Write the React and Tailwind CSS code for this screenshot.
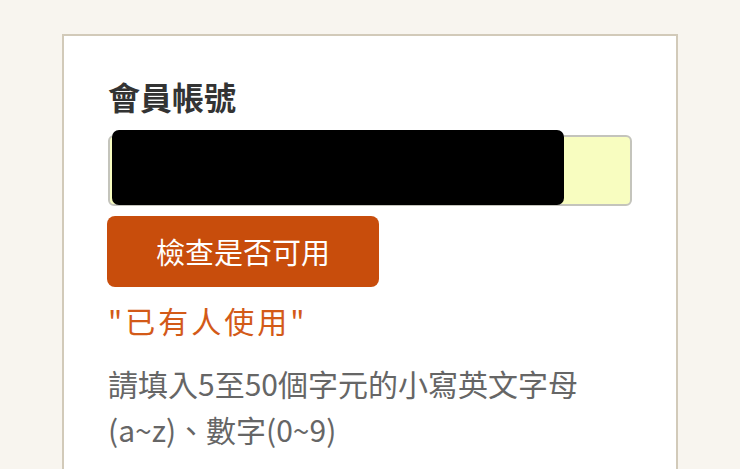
import React from 'react';

const cjk = { fontFamily: '"Noto Sans CJK TC", "Noto Sans", sans-serif' };

export default function App() {
  return (
    <div className="h-screen w-full overflow-hidden bg-[#f8f5ef] pt-[34px] pl-[62px]" style={cjk}>
      <div className="w-[616px] h-[480px] border-2 border-[#d2cab9] bg-white pl-[44px] pr-[44px] pt-[40px]">
        {/* title */}
        <h2 className="text-[32px] leading-[40px] font-bold text-[#333333]">會員帳號</h2>

        {/* account input, value redacted */}
        <div className="relative mt-[19px] h-[71px] w-[524px] rounded-[6px] border-2 border-[#c4c4bc] bg-[#f8fdc0]">
          <div className="absolute left-[2px] top-[-7px] h-[75px] w-[452px] rounded-[7px] bg-black" />
        </div>

        <button className="mt-[10px] ml-[-1px] flex h-[71px] w-[272px] items-center justify-center rounded-[8px] bg-[#c84d0c] text-[29px] text-white">
          檢查是否可用
        </button>

        <p className="mt-[13px] text-[30px] leading-[40px] tracking-[3px] text-[#d35a18]">"已有人使用"</p>

        <p className="mt-[20px] text-[30px] leading-[46px] text-[#666666]">
          請填入5至50個字元的小寫英文字母(a~z)、數字(0~9)
        </p>
      </div>
    </div>
  );
}
